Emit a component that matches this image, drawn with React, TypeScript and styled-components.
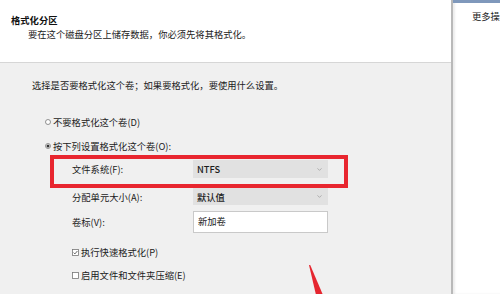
import React from 'react';
import styled, { createGlobalStyle } from 'styled-components';
import { ChevronDown } from 'lucide-react';

const GlobalStyle = createGlobalStyle`
  html, body {
    margin: 0;
    padding: 0;
    width: 500px;
    height: 294px;
    overflow: hidden;
    background: #ffffff;
  }
  * {
    box-sizing: border-box;
  }
  body {
    font-family: 'Noto Sans CJK SC', 'Noto Sans', sans-serif;
    font-size: 9.3px;
    color: #1b1b1b;
  }
`;

const Radio: React.FC<{ checked?: boolean }> = ({ checked }) => (
  <svg width="6" height="6" viewBox="0 0 6 6">
    <circle cx="3" cy="3" r="2.5" fill="#fff" stroke="#777" strokeWidth="0.8" />
    {checked && <circle cx="3" cy="3" r="1.5" fill="#333" />}
  </svg>
);

const Check: React.FC<{ checked?: boolean }> = ({ checked }) => (
  <svg width="7" height="7" viewBox="0 0 7 7">
    <rect x="0.5" y="0.5" width="6" height="6" fill="#fff" stroke="#777" strokeWidth="0.8" />
    {checked && <path d="M1.6 3.6 L2.9 4.9 L5.4 2" fill="none" stroke="#555" strokeWidth="0.9" />}
  </svg>
);

const App: React.FC = () => {
  return (
    <>
      <GlobalStyle />
      <Window>
        <Main>
          <Header>
            <Title>格式化分区</Title>
            <Subtitle>要在这个磁盘分区上储存数据，你必须先将其格式化。</Subtitle>
          </Header>
          <Body>
            <Intro>选择是否要格式化这个卷；如果要格式化，要使用什么设置。</Intro>
            <Option $mt={23}>
              <Radio />
              <span>不要格式化这个卷(D)</span>
            </Option>
            <Option $mt={10}>
              <Radio checked />
              <span>按下列设置格式化这个卷(O):</span>
            </Option>
            <FieldRow $mt={7} $h={18}>
              <FieldLabel>文件系统(F):</FieldLabel>
              <Select>
                <span>NTFS</span>
                <ChevronDown size={7} color="#8a8a8a" strokeWidth={2} />
              </Select>
            </FieldRow>
            <FieldRow $mt={10} $h={17}>
              <FieldLabel>分配单元大小(A):</FieldLabel>
              <Select>
                <span>默认值</span>
                <ChevronDown size={7} color="#8a8a8a" strokeWidth={2} />
              </Select>
            </FieldRow>
            <FieldRow $mt={6} $h={22}>
              <FieldLabel>卷标(V):</FieldLabel>
              <TextBox>新加卷</TextBox>
            </FieldRow>
            <CheckRow $mt={12}>
              <Check checked />
              <span>执行快速格式化(P)</span>
            </CheckRow>
            <CheckRow $mt={9}>
              <Check />
              <span>启用文件和文件夹压缩(E)</span>
            </CheckRow>
            <Highlight />
            <Arrow width="30" height="40" viewBox="0 0 30 40">
              <polygon points="1,0 2.2,0 15,30 8,30" fill="#e5262f" />
            </Arrow>
          </Body>
        </Main>
        <SidePanel>
          <SideBar />
          <SideText>更多操</SideText>
        </SidePanel>
      </Window>
    </>
  );
};

export default App;

const Window = styled.div`
  display: flex;
  width: 500px;
  height: 294px;
  overflow: hidden;
`;
const Main = styled.div`
  display: flex;
  flex-direction: column;
  width: 451px;
  height: 100%;
  background: #f0f0f0;
`;
const Header = styled.div`
  height: 63px;
  padding: 13px 0 0 11px;
  background: #ffffff;
  border-bottom: 1px solid #d6d6d6;
`;
const Title = styled.div`
  font-weight: 700;
  line-height: 14px;
  color: #111;
`;
const Subtitle = styled.div`
  margin-left: 17px;
  line-height: 14px;
`;
const Body = styled.div`
  position: relative;
  flex: 1;
  display: flex;
  flex-direction: column;
  padding-left: 32px;
`;
const Intro = styled.div`
  margin-top: 15px;
  line-height: 14px;
`;
const Option = styled.div<{ $mt: number }>`
  display: flex;
  align-items: center;
  gap: 2px;
  margin: ${({ $mt }) => $mt}px 0 0 13px;
  height: 14px;
  line-height: 14px;
`;
const FieldRow = styled.div<{ $mt: number; $h: number }>`
  display: flex;
  align-items: center;
  margin: ${({ $mt }) => $mt}px 0 0 40px;
  height: ${({ $h }) => $h}px;
`;
const FieldLabel = styled.div`
  width: 121px;
  line-height: 14px;
`;
const Select = styled.div`
  display: flex;
  align-items: center;
  justify-content: space-between;
  width: 135px;
  height: 100%;
  padding: 0 5px 0 4px;
  background: #e1e1e1;
  color: #1b1b1b;
  font-weight: 500;
`;
const TextBox = styled.div`
  width: 135px;
  height: 100%;
  padding: 2px 4px;
  background: #ffffff;
  border: 1px solid #c9c9c9;
  line-height: 14px;
`;
const CheckRow = styled.div<{ $mt: number }>`
  display: flex;
  align-items: center;
  gap: 2px;
  margin: ${({ $mt }) => $mt}px 0 0 40px;
  height: 14px;
  line-height: 14px;
`;
const Highlight = styled.div`
  position: absolute;
  left: 50px;
  top: 92px;
  width: 298px;
  height: 33px;
  border: 4px solid #e8262f;
  pointer-events: none;
`;
const Arrow = styled.svg`
  position: absolute;
  left: 308px;
  top: 202px;
`;
const SidePanel = styled.div`
  position: relative;
  flex: 1;
  background: #ffffff;
  border-left: 2px solid #b9b9b9;
  box-shadow: inset 2px 0 2px rgba(0, 0, 0, 0.08);
`;
const SideBar = styled.div`
  height: 3px;
  background: #7f98bb;
`;
const SideText = styled.div`
  margin: 6px 0 0 19px;
  line-height: 14px;
  white-space: nowrap;
`;
